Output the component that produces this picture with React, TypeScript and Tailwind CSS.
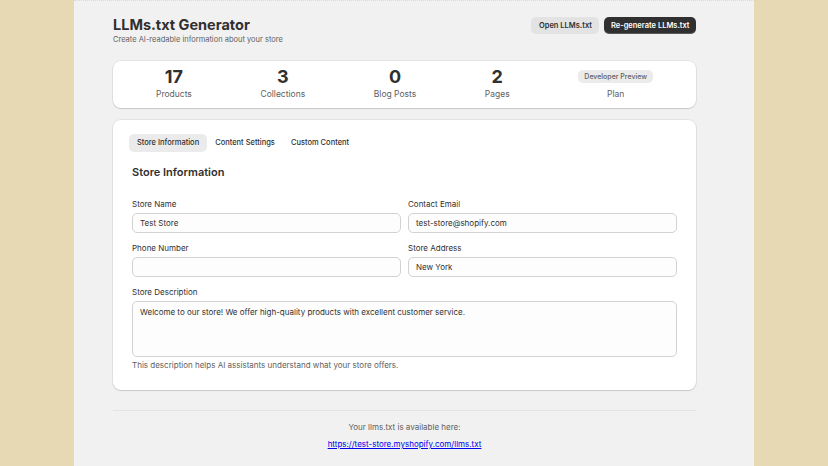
import React from 'react';

const stats = [
  { value: '17', label: 'Products' },
  { value: '3', label: 'Collections' },
  { value: '0', label: 'Blog Posts' },
  { value: '2', label: 'Pages' },
];

const Field = ({ label, value }: { label: string; value: string }) => (
  <div className="flex flex-col">
    <label className="text-[8px] leading-[12px] text-[#303030] mb-[3px]">{label}</label>
    <div className="h-[20px] rounded-[5px] border border-[#d2d2d2] bg-[#fdfdfd] px-[7px] flex items-center text-[8px] text-[#303030]">
      {value}
    </div>
  </div>
);

export default function App() {
  return (
    <div className="min-h-[466px] bg-[#e8d9b5] font-['Inter',sans-serif]">
      <div className="ml-[74px] w-[680px] min-h-[466px] bg-[#f1f1f1] border-t border-dotted border-[#dadada] pl-[39px] pr-[58px] pt-[15px]">
        {/* Header */}
        <div className="flex items-start justify-between">
          <div>
            <h1 className="text-[14.5px] leading-[18px] font-bold text-[#303030]">LLMs.txt Generator</h1>
            <p className="text-[7.5px] leading-[12px] text-[#616161]">Create AI-readable information about your store</p>
          </div>
          <div className="flex gap-[5px] mt-[1px]">
            <button className="h-[17px] px-[7.5px] rounded-[5px] bg-[#e3e3e3] text-[7.5px] font-semibold text-[#303030]">
              Open LLMs.txt
            </button>
            <button className="h-[17px] px-[6.5px] rounded-[5px] bg-[#303030] text-[7.5px] font-semibold text-white shadow-[inset_0_-1px_0_rgba(255,255,255,0.2)]">
              Re-generate LLMs.txt
            </button>
          </div>
        </div>

        {/* Stats */}
        <div className="mt-[15px] bg-white rounded-[8px] shadow-[0_1px_1px_rgba(0,0,0,0.12),0_0_0_1px_rgba(0,0,0,0.06)] px-[43px] pt-[4px] pb-[8px] flex justify-between">
          {stats.map((s) => (
            <div key={s.label} className="flex flex-col items-center">
              <div className="h-[23px] flex items-center text-[18px] font-bold text-[#303030]">{s.value}</div>
              <div className="text-[8.5px] leading-[12px] text-[#616161]">{s.label}</div>
            </div>
          ))}
          <div className="flex flex-col items-center">
            <div className="h-[23px] flex items-center">
              <span className="h-[13px] px-[6px] rounded-[5px] bg-[#ebebeb] text-[7px] leading-[13px] font-medium text-[#616161]">
                Developer Preview
              </span>
            </div>
            <div className="text-[8.5px] leading-[12px] text-[#616161]">Plan</div>
          </div>
        </div>

        {/* Main card */}
        <div className="mt-[12px] bg-white rounded-[8px] shadow-[0_1px_1px_rgba(0,0,0,0.12),0_0_0_1px_rgba(0,0,0,0.06)] px-[19px] pt-[14px] pb-[19px]">
          <div className="flex -ml-[3px]">
            <div className="h-[18px] px-[8px] rounded-[5px] bg-[#ebebeb] flex items-center text-[7.5px] font-medium text-[#303030]">
              Store Information
            </div>
            <div className="h-[18px] px-[8px] rounded-[5px] flex items-center text-[7.5px] font-medium text-[#303030]">
              Content Settings
            </div>
            <div className="h-[18px] px-[8px] rounded-[5px] flex items-center text-[7.5px] font-medium text-[#303030]">
              Custom Content
            </div>
          </div>

          <h2 className="mt-[12px] text-[11px] leading-[16px] font-semibold text-[#303030]">Store Information</h2>

          <div className="mt-[18px] grid grid-cols-2 gap-x-[7px] gap-y-[9px]">
            <Field label="Store Name" value="Test Store" />
            <Field label="Contact Email" value="test-store@shopify.com" />
            <Field label="Phone Number" value="" />
            <Field label="Store Address" value="New York" />
          </div>

          <div className="mt-[9px] flex flex-col">
            <label className="text-[8px] leading-[12px] text-[#303030] mb-[3px]">Store Description</label>
            <div className="h-[56px] rounded-[5px] border border-[#d2d2d2] bg-[#fdfdfd] px-[7px] pt-[4px] text-[8px] leading-[12px] text-[#303030]">
              Welcome to our store! We offer high-quality products with excellent customer service.
            </div>
            <p className="mt-[2px] text-[8px] leading-[12px] text-[#616161]">
              This description helps AI assistants understand what your store offers.
            </p>
          </div>
        </div>

        {/* Footer */}
        <div className="mt-[20px] border-t border-[#e3e3e3] pt-[10px] flex flex-col items-center gap-[5px]">
          <p className="text-[8px] leading-[12px] text-[#616161]">Your llms.txt is available here:</p>
          <a href="#" className="text-[8px] leading-[12px] text-[#0000ee] underline">
            https://test-store.myshopify.com/llms.txt
          </a>
        </div>
      </div>
    </div>
  );
}
